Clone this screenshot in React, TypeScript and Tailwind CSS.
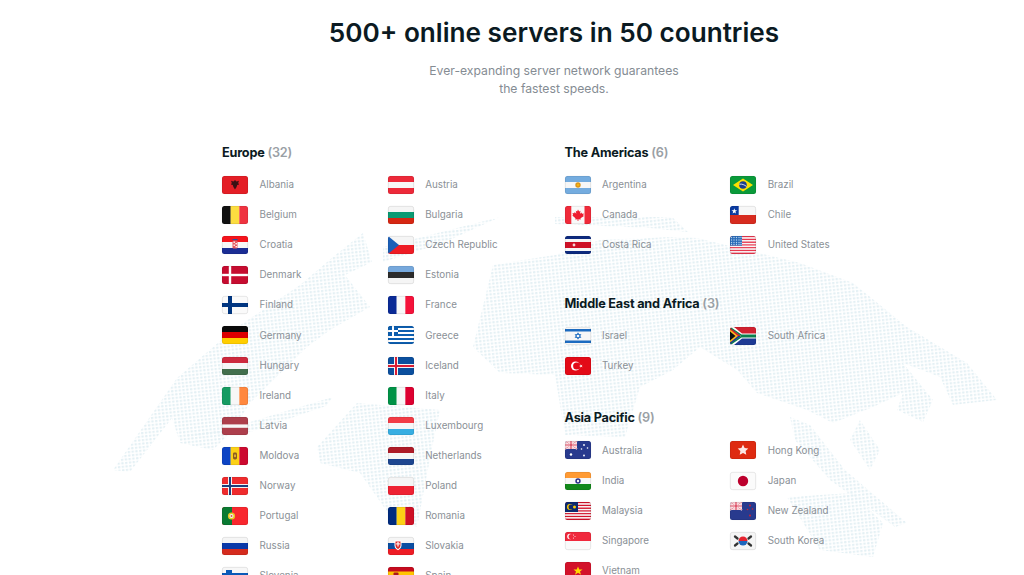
import React, { useId } from "react";

type Draw = () => React.ReactNode;

const H = (...c: string[]) => c.map((f, i) => <rect key={i} x={0} y={(18 / c.length) * i} width={26} height={18 / c.length + 0.1} fill={f} />);
const V = (...c: string[]) => c.map((f, i) => <rect key={i} x={(26 / c.length) * i} y={0} width={26 / c.length + 0.1} height={18} fill={f} />);
const Cross = (bg: string, fg: string, w: number, inner?: string, iw = 0) => (
  <>
    <rect width={26} height={18} fill={bg} />
    <rect x={8 - w / 2} width={w} height={18} fill={fg} />
    <rect y={9 - w / 2} width={26} height={w} fill={fg} />
    {inner && <rect x={8 - iw / 2} width={iw} height={18} fill={inner} />}
    {inner && <rect y={9 - iw / 2} width={26} height={iw} fill={inner} />}
  </>
);
const UK = () => (
  <g>
    <rect width={12} height={8} fill="#f4c7cf" />
    <path d="M0 0L12 8M12 0L0 8" stroke="#fff" strokeWidth={1.6} />
    <path d="M0 0L12 8M12 0L0 8" stroke="#d8304a" strokeWidth={0.6} />
    <path d="M6 0V8M0 4H12" stroke="#fff" strokeWidth={2.4} />
    <path d="M6 0V8M0 4H12" stroke="#d8304a" strokeWidth={1.2} />
  </g>
);
const Stripes = (n: number, a: string, b: string) =>
  Array.from({ length: n }, (_, i) => <rect key={i} y={(18 / n) * i} width={26} height={18 / n + 0.05} fill={i % 2 ? b : a} />);

const FLAGS: Record<string, Draw> = {
  Albania: () => (<><rect width={26} height={18} fill="#e41e26" /><path d="M13 4l1.5 1.5 2.5-.8-.8 2.3 1 1.5-2 .6-.6 2-1.6 2.4-1.6-2.4-.6-2-2-.6 1-1.5-.8-2.3 2.5.8z" fill="#3a1114" /></>),
  Austria: () => H("#ed2939", "#f7f7f7", "#ed2939"),
  Belgium: () => V("#111", "#fcdd40", "#ef3340"),
  Bulgaria: () => H("#f5f5f5", "#0a9a73", "#d62612"),
  Croatia: () => (<>{H("#f5141c", "#f7f7f7", "#1b2d94")}<rect x={10.5} y={4.5} width={5} height={8} rx={1} fill="#e45a60" /><rect x={11.5} y={5.5} width={1.4} height={1.4} fill="#fff" /><rect x={13.5} y={7} width={1.4} height={1.4} fill="#fff" /><rect x={11.5} y={8.5} width={1.4} height={1.4} fill="#fff" /><rect x={13.5} y={10} width={1.4} height={1.4} fill="#fff" /><rect x={10.5} y={3} width={5} height={1.2} fill="#2a4d9c" /></>),
  "Czech Republic": () => (<>{H("#f5f5f5", "#ee1c25")}<path d="M0 0L11 9L0 18Z" fill="#1b5fb8" /></>),
  Denmark: () => Cross("#c60c30", "#fff", 2.4),
  Estonia: () => H("#76a8dc", "#2b2b2b", "#f5f5f5"),
  Finland: () => Cross("#fafafa", "#003580", 4),
  France: () => V("#0a2a96", "#f8f8f8", "#f5123a"),
  Germany: () => H("#0a0a0a", "#dd0000", "#ffce00"),
  Greece: () => (<>{Stripes(9, "#0d5eaf", "#fff")}<rect width={10} height={10} fill="#0d5eaf" /><rect x={4} width={2} height={10} fill="#fff" /><rect y={4} width={10} height={2} fill="#fff" /></>),
  Hungary: () => H("#cd2a3e", "#f7f7f7", "#436f4d"),
  Iceland: () => (<>{Cross("#0b4f9e", "#f5f5f5", 4, "#dc1e35", 2)}</>),
  Ireland: () => V("#169b62", "#f7f7f7", "#ff883e"),
  Italy: () => V("#009246", "#f7f7f7", "#dd0030"),
  Latvia: () => (<><rect width={26} height={18} fill="#ad3f4c" /><rect y={7.4} width={26} height={3.4} fill="#f7f7f7" /></>),
  Luxembourg: () => H("#f23c46", "#f7f7f7", "#37aee2"),
  Moldova: () => (<>{V("#0d44c4", "#fcd116", "#cc092f")}<rect x={11} y={5.5} width={4} height={7} rx={1.4} fill="#8a5a22" /><rect x={12.2} y={7.5} width={1.6} height={2.6} fill="#f2c230" /></>),
  Netherlands: () => H("#ae1c28", "#f7f7f7", "#1d4690"),
  Norway: () => Cross("#ef2b2d", "#f5f5f5", 4, "#1c3f7c", 2),
  Poland: () => H("#f5f5f5", "#ee2233"),
  Portugal: () => (<><rect width={26} height={18} fill="#f8272e" /><rect width={10} height={18} fill="#0a7a32" /><circle cx={9.5} cy={9} r={3.6} fill="#e8c920" /><circle cx={9.5} cy={9} r={2} fill="#f5f5f5" /><circle cx={9.5} cy={9} r={1} fill="#d9504a" /></>),
  Romania: () => V("#002b7f", "#fcd116", "#ce1126"),
  Russia: () => H("#f5f5f5", "#0a39a8", "#d52b1e"),
  Slovakia: () => (<>{H("#f5f5f5", "#0b4ea2", "#ee1c25")}<path d="M6.5 3.5h7v5c0 2.6-2 4-3.5 4.8C8.500 12.500 6.500 11.100 6.500 8.500z" fill="#fff" /><path d="M7.500 4.500h5v4c0 2-1.400 3-2.500 3.600-1.100-.6-2.500-1.600-2.500-3.600z" fill="#dd2b2b" /><rect x={9.400} y={5} width={1.200} height={4.500} fill="#fff" /><rect x={8} y={6.400} width={4} height={1} fill="#fff" /></>),
  Slovenia: () => (<>{H("#f7f7f7", "#0a5ab8", "#ee1c25")}<path d="M4 3h6v4c0 2-1.800 3-3 3.500C5.800 10 4 9 4 7z" fill="#0a5ab8" /></>),
  Spain: () => (<><rect width={26} height={18} fill="#c60b1e" /><rect y={4.5} width={26} height={9} fill="#ffc400" /><rect x={5.500} y={5.500} width={5} height={6} rx={1} fill="#ad1519" /></>),
  Argentina: () => (<>{H("#74acdf", "#f7f7f7", "#74acdf")}<circle cx={13} cy={9} r={2.700} fill="#d89520" /><circle cx={13} cy={9} r={1.300} fill="#f6b40e" /></>),
  Brazil: () => (<><rect width={26} height={18} fill="#0a9a3a" /><path d="M13 2.500L23 9L13 15.500L3 9Z" fill="#fedf00" /><circle cx={13} cy={9} r={3.800} fill="#1a3e8c" /><path d="M9.400 8.200C12 7.800 14.500 8.800 16.500 10.500" stroke="#fff" strokeWidth={0.8} fill="none" /></>),
  Canada: () => (<>{V("#f02a3a", "#f9f9f9", "#f9f9f9", "#f02a3a")}<rect x={7} width={12} height={18} fill="#f9f9f9" /><path d="M13 3.500l1.200 2 1.300-.7-.5 3 1.600-1.200.4 1.200 1.800-.3-.6 2 .8.500L15.500 12.300l.3 1.200-2.400-.3V15h-.8v-1.800l-2.400.3.300-1.200L7.300 9.500l.8-.5-.6-2 1.800.3.400-1.200L11.300 7.800l-.5-3 1.300.7z" fill="#ee1c30" /></>),
  Chile: () => (<>{H("#f7f7f7", "#d72b1f")}<rect width={8.700} height={9} fill="#0a3aa0" /><path d="M4.300 2.200l.7 2 2.100.1-1.700 1.300.6 2-1.700-1.200-1.700 1.200.6-2L1.500 4.300l2.100-.1z" fill="#fff" /></>),
  "Costa Rica": () => (<><rect width={26} height={18} fill="#0d2a7e" /><rect y={3} width={26} height={12} fill="#f7f7f7" /><rect y={6} width={26} height={6} fill="#ce1126" /><circle cx={9} cy={9} r={1.400} fill="#f3d8d8" /></>),
  "United States": () => (<>{Stripes(13, "#e8374e", "#f7f7f7")}<rect width={12} height={9.700} fill="#2a6cb8" /><g fill="#b6d2ee">{[1.5,4,6.500,9,11].flatMap((x) => [1.500,4,6.500,8.500].map((y) => <circle key={x + "-" + y} cx={x} cy={y} r={0.700} />))}</g></>),
  Israel: () => (<><rect width={26} height={18} fill="#f7f7f7" /><rect y={2} width={26} height={2.500} fill="#1c6bc0" /><rect y={13.500} width={26} height={2.500} fill="#1c6bc0" /><path d="M13 5.800l2.800 4.700h-5.600zM13 12.200l-2.800-4.700h5.600z" fill="none" stroke="#1c6bc0" strokeWidth={0.800} /></>),
  "South Africa": () => (<><rect width={26} height={9} fill="#d0202f" /><rect y={9} width={26} height={9} fill="#1d3a94" /><path d="M0 0L11 9L0 18H4L12 11.500H26V6.500H12L4 0Z" fill="#fff" /><path d="M0 1L11 9L0 17H2L11.500 10.500H26V7.500H11.500L2 1Z" fill="#0a7f4c" /><path d="M0 2.500L8 9L0 15.500Z" fill="#ffb81c" /><path d="M0 4.500L5.500 9L0 13.500Z" fill="#111" /></>),
  Turkey: () => (<><rect width={26} height={18} fill="#e30a17" /><circle cx={10.500} cy={9} r={4.500} fill="#fff" /><circle cx={11.700} cy={9} r={3.600} fill="#e30a17" /><path d="M14 9l3.500-1.300-2.100 3-0-3.400 2.200 2.900z" fill="#fff" /></>),
  Australia: () => (<><rect width={26} height={18} fill="#283a8e" /><UK /><g fill="#fff"><circle cx={6} cy={13.500} r={1.200} /><circle cx={19} cy={4} r={0.900} /><circle cx={22.500} cy={7} r={0.800} /><circle cx={19} cy={14.500} r={0.900} /><circle cx={16.500} cy={8} r={0.800} /></g></>),
  "Hong Kong": () => (<><rect width={26} height={18} fill="#de2a10" /><path d="M13 3.500l1.600 3.400 3.700.5-2.700 2.600.7 3.700-3.300-1.800-3.300 1.800.7-3.700-2.700-2.600 3.700-.5z" fill="#fbe7e4" /></>),
  India: () => (<>{H("#ff9a33", "#f7f7f7", "#12881a")}<circle cx={13} cy={9} r={2.700} fill="#2a2f86" /><circle cx={13} cy={9} r={1.200} fill="#f7f7f7" /></>),
  Japan: () => (<><rect width={26} height={18} fill="#fbfbfb" /><circle cx={13} cy={9} r={5.200} fill="#bc002d" /></>),
  Malaysia: () => (<>{Stripes(13, "#d3142c", "#f7f7f7")}<rect width={13} height={10} fill="#0d2a70" /><circle cx={5} cy={5} r={3} fill="#ffcc00" /><circle cx={6} cy={5} r={2.500} fill="#0d2a70" /><circle cx={9.500} cy={5} r={1.500} fill="#ffcc00" /></>),
  "New Zealand": () => (<><rect width={26} height={18} fill="#283a8e" /><UK /><g fill="#d4202e"><circle cx={20} cy={3.500} r={0.900} /><circle cx={17.500} cy={7.500} r={0.800} /><circle cx={22.500} cy={7} r={0.800} /><circle cx={20} cy={13.500} r={1} /></g></>),
  Singapore: () => (<>{H("#f0293d", "#fafafa")}<circle cx={5} cy={4.500} r={2.800} fill="#fff" /><circle cx={6.200} cy={4.500} r={2.600} fill="#f0293d" /><g fill="#fff"><circle cx={8.500} cy={3} r={0.500} /><circle cx={10} cy={4.500} r={0.500} /><circle cx={8.500} cy={6} r={0.500} /></g></>),
  "South Korea": () => (<><rect width={26} height={18} fill="#f5f5f5" /><path d="M8.500 9a4.500 4.500 0 0 1 9 0z" fill="#e5232f" /><path d="M8.500 9a4.500 4.500 0 0 0 9 0z" fill="#1d66bd" /><g stroke="#333" strokeWidth={2.300} strokeLinecap="round"><path d="M5 4.500L7.500 6.500" /><path d="M21 4.500L18.500 6.500" /><path d="M5 13.500L7.500 11.500" /><path d="M21 13.500L18.500 11.500" /></g></>),
  Vietnam: () => (<><rect width={26} height={18} fill="#d3122a" /><path d="M13 4.500l1.300 3h3.200l-2.500 2 1 3.200-3-1.900-3 1.900 1-3.200-2.500-2h3.200z" fill="#ffd800" /></>),
};

function Flag({ name }: { name: string }) {
  const id = useId().replace(/:/g, "");
  return (
    <svg viewBox="0 0 26 18" className="h-[18px] w-[26px] shrink-0 overflow-visible" aria-hidden>
      <defs>
        <clipPath id={id}><rect width={26} height={18} rx={2.500} /></clipPath>
      </defs>
      <g clipPath={`url(#${id})`}>{FLAGS[name]?.()}</g>
      <rect x={0.300} y={0.300} width={25.400} height={17.400} rx={2.300} fill="none" stroke="rgba(0,0,0,0.14)" strokeWidth={0.600} />
    </svg>
  );
}

function Countries({ items }: { items: string[] }) {
  return (
    <div className="grid w-[332px] grid-cols-[165.700px_165.700px] auto-rows-[30.080px]">
      {items.map((n) => (
        <div key={n} className="flex items-center gap-[11.500px]">
          <Flag name={n} />
          <span className="whitespace-nowrap text-[9.800px] leading-none text-[#8a9096]">{n}</span>
        </div>
      ))}
    </div>
  );
}

function Heading({ title, count }: { title: string; count: number }) {
  return (
    <h3 className="mb-[9px] h-[17px] whitespace-nowrap text-[12.700px] font-bold leading-[17px] tracking-[-0.2px] text-[#0b1a22]">
      {title} <span className="font-semibold text-[#9aa0a5]">({count})</span>
    </h3>
  );
}

const DOTS = [
  "113,470 177,378 233,330 300,285 333,257 363,233 372,262 345,275 370,307 330,330 307,347 250,403 233,430 213,450 180,443 172,418 130,472",
  "383,247 500,217 443,243 383,262",
  "183,437 240,425 333,397 326,406 250,432",
  "317,447 357,403 440,410 433,443 417,527 393,520 360,473 320,463",
  "555,217 672,217 688,232 650,228 555,224",
  "473,347 493,265 555,255 600,240 672,237 697,238 800,263 853,283 907,327 967,363 997,400 953,405 940,377 903,363 933,400 923,422 897,410 903,393 873,407 833,423 807,410 757,393 737,370 700,347 673,370 640,387 625,437 565,435 555,375 500,373",
  "787,497 853,493 883,523 873,557 820,550",
  "790,417 810,425 845,470 907,523 895,527 830,480 795,440",
  "860,420 880,450 870,470 850,440",
];

const EUROPE = ["Albania","Austria","Belgium","Bulgaria","Croatia","Czech Republic","Denmark","Estonia","Finland","France","Germany","Greece","Hungary","Iceland","Ireland","Italy","Latvia","Luxembourg","Moldova","Netherlands","Norway","Poland","Portugal","Romania","Russia","Slovakia","Slovenia","Spain"];

export default function App() {
  return (
    <div className="relative h-[575px] w-full overflow-hidden bg-white font-['Inter',sans-serif]">
      <svg viewBox="0 0 1024 575" className="absolute left-0 top-0 h-[575px] w-[1024px]" aria-hidden>
        <defs>
          <pattern id="dots" width={3.800} height={3.500} patternUnits="userSpaceOnUse" patternTransform="rotate(-6)">
            <rect width={2.400} height={2.100} rx={0.600} fill="#e4f0f4" />
          </pattern>
        </defs>
        {DOTS.map((p) => <polygon key={p} points={p} fill="url(#dots)" />)}
      </svg>
      <div className="relative flex flex-col">
        <header className="ml-[84px] flex flex-col items-center pt-[16px]">
          <h1 className="h-[34px] whitespace-nowrap text-[26.150px] font-semibold leading-[34px] text-[#0b1a22]">500+ online servers in 50 countries</h1>
          <p className="mt-[12px] text-center text-[12.200px] leading-[18px] text-[#858c93]">Ever-expanding server network guarantees<br />the fastest speeds.</p>
        </header>
        <div className="ml-[222px] mt-[46px] flex">
          <section className="w-[342.500px]">
            <Heading title="Europe" count={32} />
            <Countries items={EUROPE} />
          </section>
          <section>
            <Heading title="The Americas" count={6} />
            <Countries items={["Argentina","Brazil","Canada","Chile","Costa Rica","United States"]} />
            <div className="mt-[34.500px]">
              <Heading title="Middle East and Africa" count={3} />
              <Countries items={["Israel","South Africa","Turkey"]} />
            </div>
            <div className="mt-[28.500px]">
              <Heading title="Asia Pacific" count={9} />
              <Countries items={["Australia","Hong Kong","India","Japan","Malaysia","New Zealand","Singapore","South Korea","Vietnam"]} />
            </div>
          </section>
        </div>
      </div>
    </div>
  );
}
